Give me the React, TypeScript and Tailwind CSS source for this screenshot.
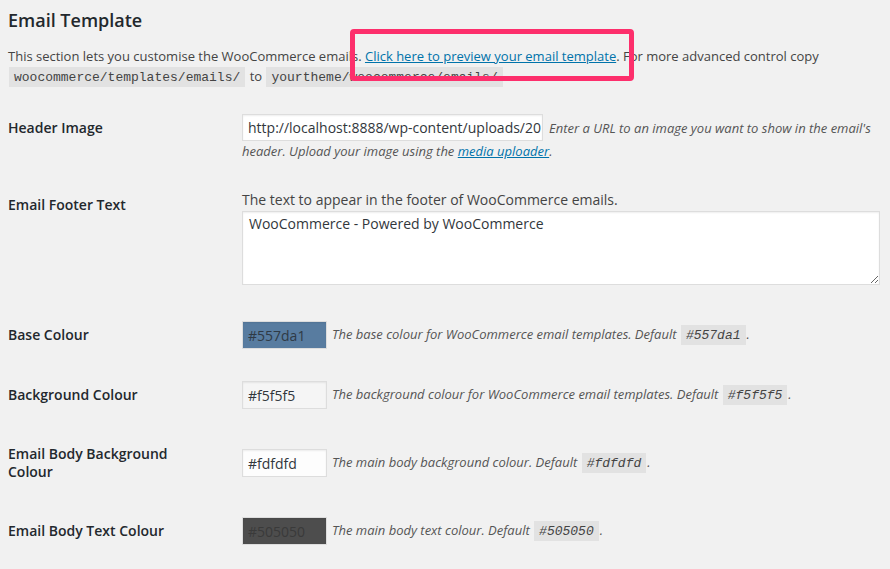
import React from 'react';

const sans = { fontFamily: '"Open Sans", "Noto Sans", sans-serif' };

const Code = ({ children }: { children: React.ReactNode }) => (
  <code className="bg-[#e2e2e2] px-[5px] pt-[3px] pb-[2px] mx-[1px] font-['Liberation_Mono',monospace] text-[13px] leading-[17px] text-[#444]">
    {children}
  </code>
);

const ColourRow = ({
  label,
  value,
  bg,
  fg,
  desc,
  def,
}: {
  label: React.ReactNode;
  value: string;
  bg: string;
  fg: string;
  desc: string;
  def: string;
}) => (
  <div className="flex items-center">
    <div className="w-[234px] shrink-0 py-[20px] pr-[10px] text-[14px] leading-[18px] font-semibold text-[#23282d]">
      {label}
    </div>
    <div className="flex items-center py-[16px]">
      <div
        className={`w-[85px] h-[28px] border border-[#ddd] shadow-[inset_0_1px_2px_rgba(0,0,0,0.07)] px-[5px] flex items-center text-[14px] ${bg} ${fg}`}
      >
        {value}
      </div>
      <span className="ml-[5px] text-[13px] italic text-[#555]">
        {desc} <Code>{def}</Code>.
      </span>
    </div>
  </div>
);

export default function App() {
  return (
    <div className="relative min-h-screen bg-[#f1f1f1] px-[8px] pt-[8px] text-[#444]" style={sans}>
      <h2 className="text-[18px] leading-[24px] font-semibold text-[#23282d]">Email Template</h2>

      <p className="mt-[14px] text-[13px] leading-[20px]">
        This section lets you customise the WooCommerce emails.{' '}
        <a href="#" className="text-[#0073aa] underline">Click here to preview your email template</a>. For more
        advanced control copy
        <br />
        <Code>woocommerce/templates/emails/</Code> to <Code>yourtheme/woocommerce/emails/</Code>
      </p>

      <div className="mt-[14px] pr-[2px]">
        {/* Header image */}
        <div className="flex items-start">
          <div className="w-[234px] shrink-0 pt-[19px] text-[14px] leading-[18px] font-semibold text-[#23282d]">
            Header Image
          </div>
          <div className="pt-[14px] pb-[15px] text-[13px] italic text-[#555]">
            <div className="flex items-center">
              <div className="w-[301px] h-[27px] bg-white border border-[#ddd] shadow-[inset_0_1px_2px_rgba(0,0,0,0.07)] px-[5px] flex items-center overflow-hidden whitespace-nowrap not-italic text-[14px] text-[#32373c]">
                http://localhost:8888/wp-content/uploads/20
              </div>
              <span className="ml-[6px] leading-[20px]">Enter a URL to an image you want to show in the email's</span>
            </div>
            <div className="leading-[20px]">
              header. Upload your image using the{' '}
              <a href="#" className="text-[#0073aa] underline">media uploader</a>.
            </div>
          </div>
        </div>

        {/* Footer text */}
        <div className="flex items-start">
          <div className="w-[234px] shrink-0 pt-[20px] text-[14px] leading-[18px] font-semibold text-[#23282d]">
            Email Footer Text
          </div>
          <div className="flex-1 pt-[14px] pb-[20px]">
            <p className="text-[14px] leading-[20px] text-[#444]">The text to appear in the footer of WooCommerce emails.</p>
            <textarea
              readOnly
              value="WooCommerce - Powered by WooCommerce"
              className="mt-[1px] block w-full h-[74px] bg-white border border-[#ddd] shadow-[inset_0_1px_2px_rgba(0,0,0,0.07)] px-[6px] py-[2px] text-[14px] leading-[20px] text-[#32373c] outline-none"
            />
          </div>
        </div>

        <ColourRow
          label="Base Colour"
          value="#557da1"
          bg="bg-[#587ca0]"
          fg="text-[#2f3a46]"
          desc="The base colour for WooCommerce email templates. Default"
          def="#557da1"
        />
        <ColourRow
          label="Background Colour"
          value="#f5f5f5"
          bg="bg-[#f5f5f5]"
          fg="text-[#32373c]"
          desc="The background colour for WooCommerce email templates. Default"
          def="#f5f5f5"
        />
        <ColourRow
          label={
            <>
              Email Body Background
              <br />
              Colour
            </>
          }
          value="#fdfdfd"
          bg="bg-[#fdfdfd]"
          fg="text-[#32373c]"
          desc="The main body background colour. Default"
          def="#fdfdfd"
        />
        <ColourRow
          label="Email Body Text Colour"
          value="#505050"
          bg="bg-[#4d4d4d]"
          fg="text-[#3a3a3a]"
          desc="The main body text colour. Default"
          def="#505050"
        />
      </div>

      {/* annotation highlight */}
      <div className="absolute left-[350px] top-[29px] w-[284px] h-[52px] border-[5px] border-[#fd2f6c] rounded-[4px]" />
    </div>
  );
}
